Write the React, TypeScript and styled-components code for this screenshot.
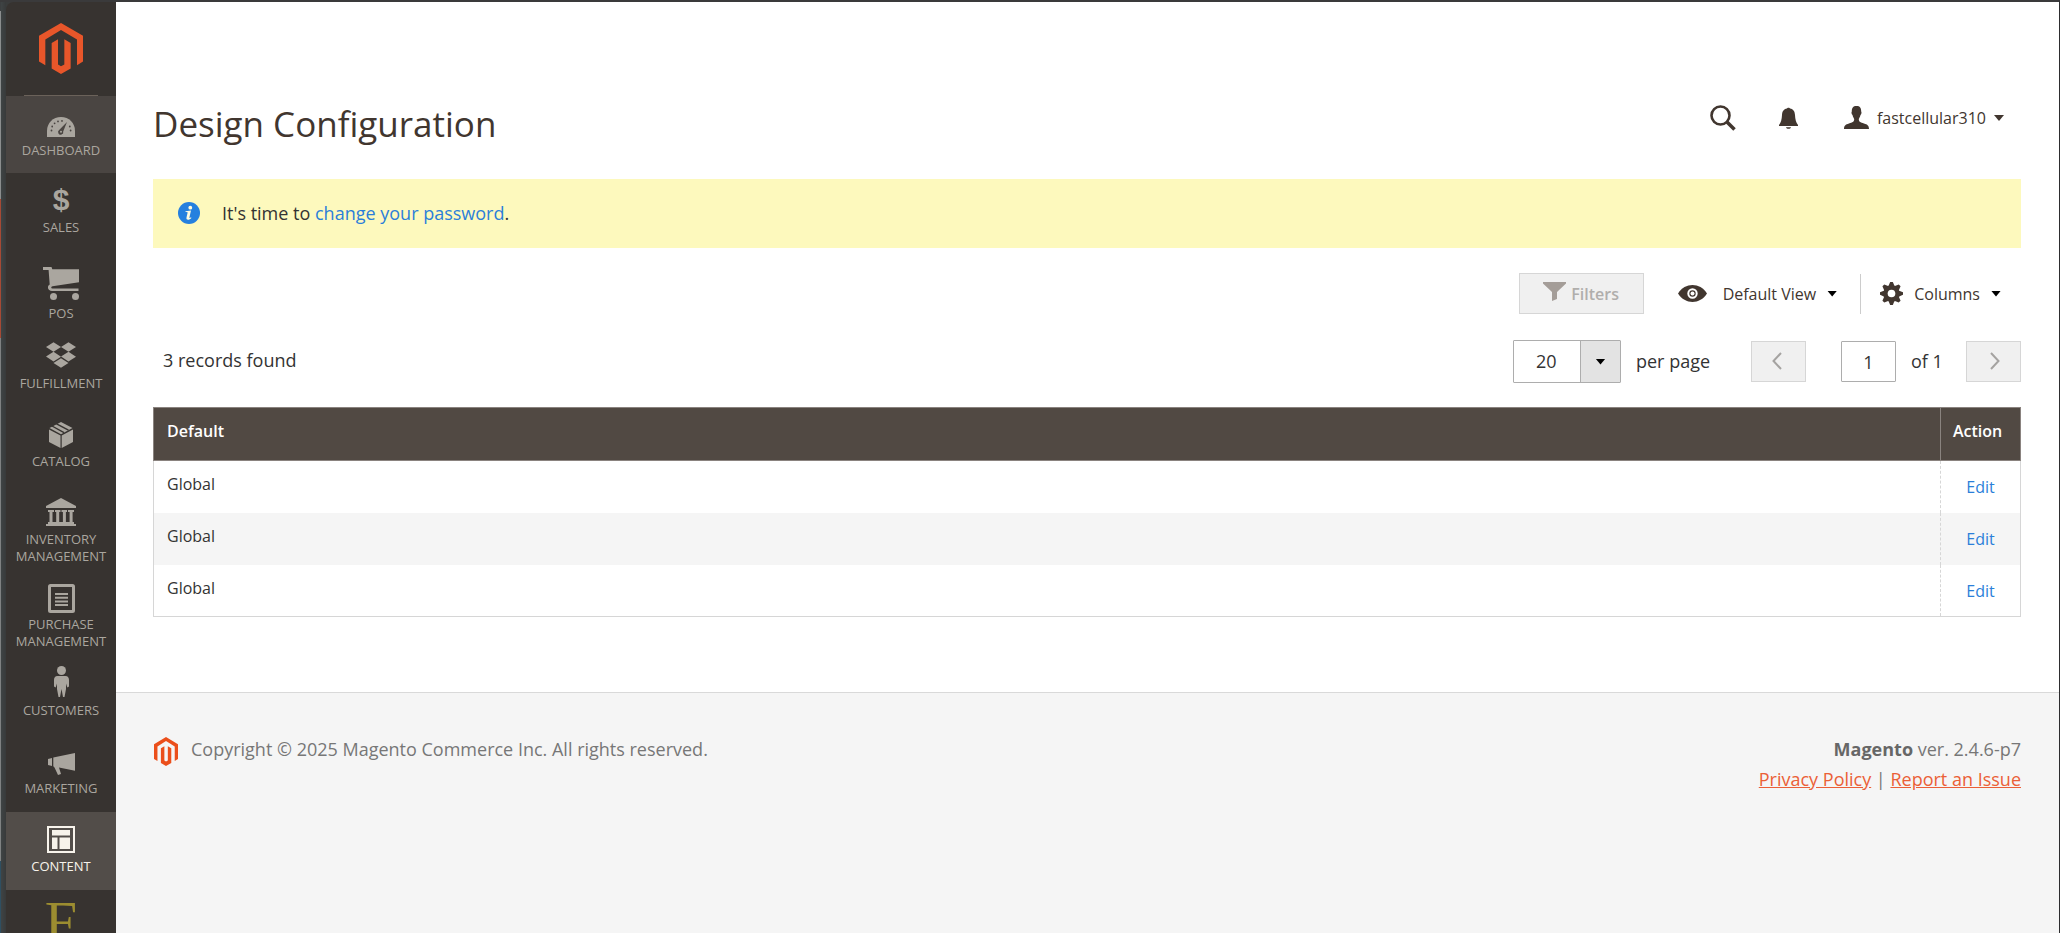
import React from "react";
import styled, { createGlobalStyle, css } from "styled-components";
import { FaDropbox } from "react-icons/fa";

const GlobalStyle = createGlobalStyle`
  *, *::before, *::after { box-sizing: border-box; }
  body {
    margin: 0;
    background: #fff;
    color: #41362f;
    font-family: "Open Sans", "Noto Sans", sans-serif;
    font-size: 18px;
    line-height: 24px;
  }
  button, input, select { font: inherit; color: inherit; margin: 0; }
  a { color: #2b7fd9; text-decoration: none; }
`;

const Frame = styled.div`
  display: flex;
  align-items: flex-start;
  min-height: 100vh;
  border-top: 2px solid #3a3a3b;
  border-right: 1px solid #2d2d2f;
  background: #3a3c3c;
`;

const Edge = styled.div`
  width: 6px;
  flex: none;
  align-self: stretch;
  border-left: 1px solid #7f8282;
  border-image: linear-gradient(
      #3c3f40 10px, #8b8e8e 10px, #8b8e8e 198px, #a54a35 198px, #a54a35 336px,
      #7f8282 336px, #7f8282 858px, #2f4f61 858px) 1;
  background: linear-gradient(90deg, #3f4445, #383a3a);
`;

const Sidebar = styled.nav`
  width: 110px;
  flex: none;
  height: calc(100vh - 2px);
  overflow: hidden;
  background: #373330;
  border-top-left-radius: 8px;
`;

const LogoLink = styled.a`
  display: flex;
  justify-content: center;
  height: 94px;
  padding-top: 21px;
  margin: 0 18px;
  border-bottom: 1px solid #6b625a;
`;

const MenuItem = styled.a<{ $state?: "hover" | "active"; $compact?: boolean }>`
  display: flex;
  flex-direction: column;
  align-items: center;
  gap: 5px;
  padding: 10px 4px 15px;
  color: #aaa69f;
  font-size: 13px;
  line-height: 17px;
  text-align: center;
  text-transform: uppercase;
  ${p => p.$state === "hover" && css`padding-bottom: 14px; background: #4a4542;`}
  ${p => p.$state === "active" && css`background: #524d49; color: #f7f3eb;`}
  ${p => p.$compact && css`gap: 3px; padding: 2px 4px 6px;`}
`;

const IconSlot = styled.span`
  display: flex;
  align-items: flex-end;
  justify-content: center;
  height: 31px;
`;

const CartItem = styled(MenuItem)`
  padding: 18px 4px 7px;
`;

const Dollar = styled.span`
  font: bold 30px/29px "Liberation Sans", Arial, sans-serif;
`;

const ExtensionMark = styled.a`
  display: block;
  color: #9c8d30;
  font: 58px/64px "Liberation Serif", "Times New Roman", serif;
  text-align: center;
`;

const Page = styled.div`
  flex: 1;
  min-width: 0;
  align-self: stretch;
  display: flex;
  flex-direction: column;
  background: #fff;
`;

const Main = styled.main`
  padding: 92px 38px 75px 37px;
`;

const Header = styled.header`
  display: flex;
  justify-content: space-between;
  align-items: flex-start;
  height: 85px;
`;

const Title = styled.h1`
  margin: 0;
  padding-top: 6px;
  font-size: 35px;
  line-height: 48px;
  font-weight: 400;
`;

const HeaderTools = styled.div`
  display: flex;
  align-items: center;
  height: 48px;
  padding-right: 17px;
`;

const PlainButton = styled.button`
  display: flex;
  align-items: center;
  padding: 0;
  border: 0;
  background: none;
  font-size: 16px;
  line-height: 24px;
`;

const SearchButton = styled(PlainButton)`margin-right: 43px;`;
const BellButton = styled(PlainButton)`margin-right: 46px;`;
const UserButton = styled(PlainButton)`gap: 8px;`;

const Caret = styled.span<{ $dark?: boolean }>`
  width: 10px;
  height: 6px;
  background: ${p => (p.$dark ? "#000" : "#41362f")};
  clip-path: polygon(0 0, 100% 0, 50% 100%);
`;

const Notice = styled.div`
  display: flex;
  align-items: center;
  gap: 22px;
  height: 69px;
  padding: 0 25px 2px;
  background: #fdf9bd;
  color: #333;
`;

const ViewBar = styled.div`
  display: flex;
  justify-content: flex-end;
  align-items: center;
  margin-top: 25px;
  height: 41px;
`;

const FilterButton = styled.button`
  display: flex;
  align-items: center;
  justify-content: center;
  gap: 5px;
  width: 125px;
  height: 41px;
  margin-right: 34px;
  padding: 0;
  border: 1px solid #d6d6d6;
  background: #f0f0f0;
  color: #b0aeac;
  font-size: 16px;
  font-weight: 600;
`;

const ViewButton = styled(PlainButton)`
  height: 40px;
  padding-right: 23px;
  border-right: 1px solid #ccc;
`;

const ColumnsButton = styled(PlainButton)`
  padding: 0 20px 0 19px;
`;

const ButtonText = styled.span`
  padding: 0 11px;
`;

const ViewText = styled(ButtonText)`
  padding-left: 16px;
`;

const PagerBar = styled.div`
  display: flex;
  align-items: center;
  height: 43px;
  margin-top: 26px;
  padding-left: 10px;
  color: #333;
`;

const Records = styled.span`
  margin-right: auto;
  padding-bottom: 3px;
`;

const SizeSelect = styled.label`
  position: relative;
  width: 108px;
  height: 43px;
`;

const Select = styled.select`
  width: 100%;
  height: 100%;
  padding: 0 0 1px 22px;
  border: 1px solid #adadad;
  border-radius: 1px;
  background: #fff;
  appearance: none;
`;

const SelectArrow = styled.span`
  position: absolute;
  top: 1px;
  right: 1px;
  bottom: 1px;
  width: 40px;
  display: flex;
  align-items: center;
  justify-content: center;
  border-left: 1px solid #adadad;
  background: #e3e3e3;
  pointer-events: none;
`;

const PagerText = styled.span<{ $width: number }>`
  width: ${p => p.$width}px;
  padding: 0 0 1px 15px;
  white-space: nowrap;
`;

const PageButton = styled.button`
  display: flex;
  align-items: center;
  justify-content: center;
  width: 55px;
  height: 41px;
  padding: 0 4px 2px 0;
  border: 1px solid #d6d6d6;
  background: #f0f0f0;
  color: #a5a3a1;
`;

const NextButton = styled(PageButton)`
  padding: 0 0 2px 2px;
`;

const PageInput = styled.input`
  width: 55px;
  height: 41px;
  margin-left: 35px;
  padding: 0;
  border: 1px solid #adadad;
  border-radius: 1px;
  background: #fff;
  text-align: center;
`;

const Table = styled.table`
  width: 100%;
  margin-top: 24px;
  border-collapse: collapse;
  font-size: 16px;
  line-height: 22px;
  color: #333;
`;

const HeadCell = styled.th<{ $narrow?: boolean }>`
  height: 53px;
  padding: 0 ${p => (p.$narrow ? 12 : 13)}px 7px;
  border: 1px solid #8a837f;
  background: #514943;
  color: #fff;
  font-weight: 600;
  text-align: left;
  ${p => p.$narrow && css`width: 80px;`}
`;

const Row = styled.tr`
  height: 52px;
  border-left: 1px solid #d6d6d6;
  border-right: 1px solid #d6d6d6;
  &:nth-child(even) { background: #f5f5f5; }
  &:last-child { border-bottom: 1px solid #d6d6d6; }
`;

const Cell = styled.td`
  padding: 12px 13px;
  vertical-align: top;
`;

const ActionCell = styled(Cell)`
  padding: 15px 10px 0;
  border-left: 1px dashed #d6d6d6;
  text-align: center;
`;

const Footer = styled.footer`
  flex: 1;
  display: flex;
  justify-content: space-between;
  align-items: flex-start;
  padding: 41px 38px 40px 38px;
  border-top: 1px solid #d9d9d9;
  background: #f5f5f5;
  color: #777;
`;

const Copyright = styled.p`
  display: flex;
  gap: 13px;
  margin: 0;
  line-height: 30px;
`;

const FooterLogo = styled.span`
  display: flex;
  padding-top: 3px;
`;

const Legal = styled.div`
  line-height: 30px;
  text-align: right;
  a { color: #eb5f37; text-decoration: underline; }
  strong { font-weight: 700; color: #676767; }
`;

const MagentoLogo = ({ width, height, color }: { width: number; height: number; color: string }) => (
  <svg width={width} height={height} viewBox="0 0 132 151" preserveAspectRatio="none" fill={color} aria-hidden="true">
    <path d="M66 0 132 38V114L114 125V49L66 21 19 49V125L0 114V38Z" />
    <path d="M38 59 57 48V123L66 128 76 123V48L95 59V135L66 151 38 135Z" />
  </svg>
);

const DashboardIcon = () => (
  <svg width="28" height="20" viewBox="0 0 28 20" aria-hidden="true">
    <path fill="#aaa69f" d="M0 20V14C0 6 6 0 14 0S28 6 28 14V20Z" />
    <g fill="#4a4542">
      <circle cx="4.5" cy="13.5" r=".9" /><circle cx="5.2" cy="9.5" r=".9" />
      <circle cx="7.6" cy="6.3" r=".9" /><circle cx="11" cy="4.4" r=".9" />
      <circle cx="15" cy="3.9" r=".9" /><circle cx="22.8" cy="9.5" r=".9" />
      <circle cx="23.6" cy="13.5" r=".9" />
      <path d="M20 5 16.2 14.4A2.6 2.6 0 1 1 12.4 12.8Z" />
    </g>
    <circle cx="14" cy="14.8" r="1" fill="#aaa69f" />
  </svg>
);

const CartIcon = () => (
  <svg width="36" height="33" viewBox="0 0 36 33" fill="currentColor" aria-hidden="true">
    <path d="M0 0H8.500L9.300 2.300H36V15.300L9.500 19.200C7.800 19.600 7.800 21.400 9.500 21.400H35.500V24H9C4.500 24 3.800 19 6.700 17.600L5.600 3H0Z" />
    <circle cx="10.500" cy="29.500" r="3.500" /><circle cx="32.500" cy="29.500" r="3.500" />
  </svg>
);

const BoxIcon = () => (
  <svg width="24" height="26" viewBox="0 0 24 26" fill="currentColor" aria-hidden="true">
    <path d="M0 7.500 11.500 13.500V26L0 20Z M24 7.500 12.700 13.500V26L24 20Z M12 0 23.500 6 12 12.200.5 6Z" />
    <path d="M3 4 15 10.600M7.500 1.800 19.500 8.200" stroke="#373330" strokeWidth="1.400" fill="none" />
  </svg>
);

const BankIcon = () => (
  <svg width="30" height="28" viewBox="0 0 30 28" fill="currentColor" aria-hidden="true">
    <path d="M15 0 30 8V10H0V8Z M2 12H8V14H2Z M9 12H14.500V14H9Z M15.500 12H21V14H15.500Z M22 12H28V14H22Z" />
    <path d="M3.500 14H6.500V24H3.500Z M10.200 14H13.200V24H10.200Z M16.900 14H19.900V24H16.900Z M23.600 14H26.600V24H23.600Z M2 24H28V26H30V28H0V26H2Z" />
  </svg>
);

const ListIcon = () => (
  <svg width="27" height="29" viewBox="0 0 27 29" fill="none" stroke="currentColor" aria-hidden="true">
    <rect x="1.500" y="1.500" width="24" height="26" rx="1" strokeWidth="3" />
    <path d="M7 10H20M7 13.700H20M7 17.400H20M7 21H20" strokeWidth="2" />
  </svg>
);

const PersonIcon = () => (
  <svg width="15" height="31" viewBox="0 0 15 31" fill="currentColor" aria-hidden="true">
    <circle cx="7.500" cy="4.500" r="4.500" />
    <path d="M3.500 10H11.500C14 10 15 12 15 14V20.500L13.300 21.500 12 17.500V23L10.500 31H9L7.500 23 6 31H4.500L3 23V17.500L1.700 21.500 0 20.500V14C0 12 1 10 3.500 10Z" />
  </svg>
);

const MegaphoneIcon = () => (
  <svg width="27" height="22" viewBox="0 0 27 22" fill="currentColor" aria-hidden="true">
    <path d="M0 6 4 5V13L0 12Z M5.300 4.600 27 0V17.800L11 14.500 13 21 10 22 6.500 14.500 5.300 13.300Z" />
  </svg>
);

const LayoutIcon = () => (
  <svg width="28" height="27" viewBox="0 0 28 27" aria-hidden="true">
    <path fill="currentColor" fillRule="evenodd" d="M0 0H28V27H0ZM2 2V25H26V2Z M5 4H23V9.500H5Z M5 11.500H10.500V23H5Z M12.500 11.500H23V23H12.500Z" />
  </svg>
);

const InfoIcon = () => (
  <svg width="22" height="22" viewBox="0 0 22 22" aria-hidden="true">
    <circle cx="11" cy="11" r="11" fill="#2580df" />
    <circle cx="12.300" cy="5.700" r="1.900" fill="#fffbe0" />
    <path fill="#fffbe0" d="M7.500 9.200 13 8.600 11.400 15.600C11.300 16.300 12.200 16 13 15.300L13.400 16C11.500 18.400 7.800 18.600 8.500 15.600L9.600 10.800C9.700 10.200 9 10.100 7.500 10.100Z" />
  </svg>
);

const SearchIcon = () => (
  <svg width="26" height="26" viewBox="0 0 26 26" fill="none" stroke="#41362f" aria-hidden="true">
    <circle cx="10.500" cy="10.500" r="9" strokeWidth="2.600" />
    <path d="M17 17 24.500 24.500" strokeWidth="3.600" />
  </svg>
);

const BellIcon = () => (
  <svg width="19" height="22" viewBox="0 0 19 22" fill="#41362f" aria-hidden="true">
    <path d="M8 1.500C8 .4 11 .4 11 1.500 14.500 2.200 15.800 4.500 16 8 16.200 12.500 17 15.500 19 18V19H0V18C2 15.500 2.800 12.500 3 8 3.200 4.500 4.500 2.200 8 1.500Z M7 20.200H12C11.500 22.400 7.500 22.400 7 20.200Z" />
  </svg>
);

const UserIcon = () => (
  <svg width="25" height="24" viewBox="0 0 25 24" fill="#41362f" aria-hidden="true">
    <path d="M12.500 0C16 0 17.300 2 17.200 5.500 17.800 6.300 17.500 8.500 16.500 9 16 11 15 12.500 14.800 13 14.800 16 16.500 16.300 20 17.400 23.500 18.500 25 19.500 25 23H0C0 19.500 1.500 18.500 5 17.400 8.500 16.300 10.200 16 10.200 13 10 12.500 9 11 8.500 9 7.500 8.500 7.200 6.300 7.800 5.500 7.700 2 9 0 12.500 0Z" />
  </svg>
);

const FunnelIcon = () => (
  <svg width="23" height="23" viewBox="0 0 23 23" fill="#a49d98" aria-hidden="true">
    <path d="M0 0H23V1.500L14 10V17L9 19V10L0 1.500Z" />
  </svg>
);

const EyeIcon = () => (
  <svg width="29" height="18" viewBox="0 0 29 18" aria-hidden="true">
    <path fill="#41362f" d="M0 8.500C7-2.800 22-2.800 29 8.500 22 19.800 7 19.800 0 8.500Z" />
    <circle cx="14.500" cy="8.500" r="4.200" fill="#41362f" stroke="#fff" strokeWidth="2" />
    <circle cx="14.500" cy="8.500" r="2" fill="#fff" />
  </svg>
);

const GearIcon = () => (
  <svg width="23" height="23" viewBox="-12 -12 24 24" aria-hidden="true">
    <g fill="#41362f">
      {[0, 45, 90, 135].map(a => (
        <path key={a} transform={`rotate(${a})`} d="M-3-8 -1.400-12H1.400L3-8V8L1.400 12H-1.400L-3 8Z" />
      ))}
      <circle r="8.600" />
    </g>
    <circle r="4" fill="#fff" />
  </svg>
);

const Chevron = ({ left }: { left?: boolean }) => (
  <svg width="10" height="18" viewBox="0 0 10 18" fill="none" stroke="currentColor" strokeWidth="2" aria-hidden="true">
    <path d={left ? "M9 1 1.500 9 9 17" : "M1 1 8.500 9 1 17"} />
  </svg>
);

export default function App() {
  return (
    <>
      <GlobalStyle />
      <Frame>
        <Edge />
        <Sidebar aria-label="Main menu">
          <LogoLink href="#" aria-label="Magento">
            <MagentoLogo width={44} height={51} color="#e8562a" />
          </LogoLink>
          <MenuItem href="#" $state="hover"><IconSlot><DashboardIcon /></IconSlot>Dashboard</MenuItem>
          <MenuItem href="#"><IconSlot><Dollar>$</Dollar></IconSlot>Sales</MenuItem>
          <CartItem href="#"><IconSlot><CartIcon /></IconSlot>POS</CartItem>
          <MenuItem href="#"><IconSlot><FaDropbox size={30} /></IconSlot>Fulfillment</MenuItem>
          <MenuItem href="#"><IconSlot><BoxIcon /></IconSlot>Catalog</MenuItem>
          <MenuItem href="#"><IconSlot><BankIcon /></IconSlot>Inventory Management</MenuItem>
          <MenuItem href="#" $compact><IconSlot><ListIcon /></IconSlot>Purchase Management</MenuItem>
          <MenuItem href="#"><IconSlot><PersonIcon /></IconSlot>Customers</MenuItem>
          <MenuItem href="#"><IconSlot><MegaphoneIcon /></IconSlot>Marketing</MenuItem>
          <MenuItem href="#" $state="active"><IconSlot><LayoutIcon /></IconSlot>Content</MenuItem>
          <ExtensionMark href="#">F</ExtensionMark>
        </Sidebar>
        <Page>
          <Main>
            <Header>
              <Title>Design Configuration</Title>
              <HeaderTools>
                <SearchButton type="button" aria-label="Search"><SearchIcon /></SearchButton>
                <BellButton type="button" aria-label="Notifications"><BellIcon /></BellButton>
                <UserButton type="button"><UserIcon />fastcellular310<Caret /></UserButton>
              </HeaderTools>
            </Header>
            <Notice>
              <InfoIcon />
              <span>It's time to <a href="#">change your password</a>.</span>
            </Notice>
            <ViewBar>
              <FilterButton type="button"><FunnelIcon />Filters</FilterButton>
              <ViewButton type="button">
                <EyeIcon /><ViewText>Default View</ViewText><Caret $dark />
              </ViewButton>
              <ColumnsButton type="button">
                <GearIcon /><ButtonText>Columns</ButtonText><Caret $dark />
              </ColumnsButton>
            </ViewBar>
            <PagerBar>
              <Records>3 records found</Records>
              <SizeSelect>
                <Select aria-label="Records per page" defaultValue="20">
                  <option>20</option>
                  <option>30</option>
                  <option>50</option>
                </Select>
                <SelectArrow><Caret $dark /></SelectArrow>
              </SizeSelect>
              <PagerText $width={130}>per page</PagerText>
              <PageButton type="button" aria-label="Previous page"><Chevron left /></PageButton>
              <PageInput aria-label="Page" defaultValue="1" />
              <PagerText $width={70}>of 1</PagerText>
              <NextButton type="button" aria-label="Next page"><Chevron /></NextButton>
            </PagerBar>
            <Table>
              <thead>
                <tr><HeadCell>Default</HeadCell><HeadCell $narrow>Action</HeadCell></tr>
              </thead>
              <tbody>
                {[1, 2, 3].map(id => (
                  <Row key={id}>
                    <Cell>Global</Cell>
                    <ActionCell><a href="#">Edit</a></ActionCell>
                  </Row>
                ))}
              </tbody>
            </Table>
          </Main>
          <Footer>
            <Copyright>
              <FooterLogo><MagentoLogo width={24} height={29} color="#eb4f1b" /></FooterLogo>
              Copyright © 2025 Magento Commerce Inc. All rights reserved.
            </Copyright>
            <Legal>
              <strong>Magento</strong> ver. 2.4.6-p7<br />
              <a href="#">Privacy Policy</a> | <a href="#">Report an Issue</a>
            </Legal>
          </Footer>
        </Page>
      </Frame>
    </>
  );
}
